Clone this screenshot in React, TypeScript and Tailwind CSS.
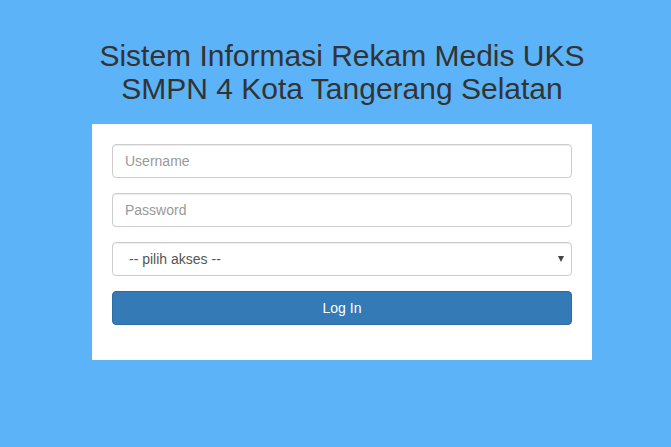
import React from 'react';

const App: React.FC = () => {
  return (
    <div className="min-h-[447px] bg-[#5cb3f7] font-['Liberation_Sans',Arial,sans-serif] pt-[39px] pl-[13px]">
      {/* Title */}
      <h1 className="text-center text-[30px] leading-[33px] text-[#333]">
        Sistem Informasi Rekam Medis UKS
        <br />
        SMPN 4 Kota Tangerang Selatan
      </h1>

      {/* Login card */}
      <div className="mx-auto mt-[19px] w-[500px] bg-white p-5 pb-[35px]">
        <form className="flex flex-col gap-[15px]">
          <input
            type="text"
            placeholder="Username"
            className="h-[34px] w-full rounded border border-[#ccc] px-3 text-[14px] text-[#555] placeholder:text-[#999] outline-none shadow-[inset_0_1px_1px_rgba(0,0,0,0.075)]"
          />
          <input
            type="password"
            placeholder="Password"
            className="h-[34px] w-full rounded border border-[#ccc] px-3 text-[14px] text-[#555] placeholder:text-[#999] outline-none shadow-[inset_0_1px_1px_rgba(0,0,0,0.075)]"
          />
          <div className="relative">
            <select className="h-[34px] w-full appearance-none rounded border border-[#ccc] bg-white pl-4 pr-8 text-[14px] text-[#555] outline-none shadow-[inset_0_1px_1px_rgba(0,0,0,0.075)]">
              <option>-- pilih akses --</option>
              <option>Admin</option>
              <option>Petugas</option>
            </select>
            {/* arrow */}
            <span className="pointer-events-none absolute right-[8px] top-[14px] h-0 w-0 border-x-[3.5px] border-t-[6px] border-x-transparent border-t-[#444]" />
          </div>
          <button
            type="button"
            className="h-[34px] w-full rounded border border-[#2e6da4] bg-[#337ab7] text-[14px] text-white"
          >
            Log In
          </button>
        </form>
      </div>
    </div>
  );
};

export default App;
